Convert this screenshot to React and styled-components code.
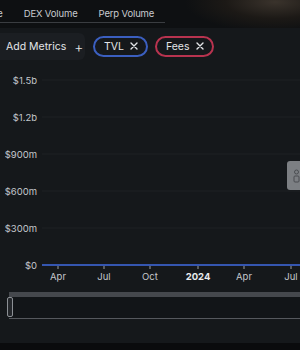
import React from "react"
import styled, { createGlobalStyle } from "styled-components"

const Global = createGlobalStyle`
  html, body {
    margin: 0;
    padding: 0;
    background: #0e1012;
    overflow: hidden;
  }
  * { box-sizing: border-box; }
`

const Page = styled.div`
  width: 300px;
  height: 350px;
  display: flex;
  flex-direction: column;
  font-family: Inter, "Liberation Sans", sans-serif;
  background: #0e1012;
  overflow: hidden;
  position: relative;
`

const TabBar = styled.div`
  height: 28px;
  flex-shrink: 0;
  background: radial-gradient(ellipse 90px 30px at 275px 2px, #3a332c 0%, #1c1916 55%, rgba(14,16,18,0) 100%), #0e1012;
`

const Tabs = styled.div`
  display: flex;
  gap: 21px;
  height: 23px;
  width: 165px;
  align-items: center;
  border-bottom: 1px solid #3a3d41;
  padding-top: 4px;
`

const Tab = styled.div`
  font-size: 9.5px;
  letter-spacing: -0.15px;
  color: #c8cbd0;
  white-space: nowrap;
  margin-left: ${p => p.$offset || 0}px;
`

const Panel = styled.div`
  flex: 1;
  background: #15181b;
  display: flex;
  flex-direction: column;
  position: relative;
`

const Toolbar = styled.div`
  display: flex;
  align-items: center;
  height: 41px;
  padding-bottom: 5px;
`

const AddButton = styled.div`
  display: flex;
  align-items: center;
  gap: 8px;
  height: 27px;
  width: 85px;
  padding-left: 6px;
  background: #1b1e22;
  border-radius: 0 6px 6px 0;
  color: #e3e5e8;
  font-size: 10.5px;
  white-space: nowrap;
  margin-right: 8px;
`

const Plus = styled.span`
  font-size: 14px;
  font-weight: 300;
  color: #e3e5e8;
`

const Pill = styled.div`
  display: flex;
  align-items: center;
  gap: 6px;
  height: 21px;
  padding: 0 8px 0 9px;
  border: 2px solid ${p => p.$color};
  border-radius: 11px;
  color: #e3e5e8;
  font-size: 10.5px;
  margin-right: 7px;
`

const Chart = styled.svg`
  display: block;
  flex-shrink: 0;
`

const AxisText = styled.text`
  font-family: Inter, "Liberation Sans", sans-serif;
  font-size: 9.5px;
  fill: ${p => (p.$bold ? "#e8eaed" : "#c4c7cc")};
  font-weight: ${p => (p.$bold ? 700 : 400)};
`

const Slider = styled.div`
  margin-left: 9px;
  margin-top: 7px;
  height: 27px;
  border-top: 5px solid #45484d;
  border-bottom: 1px solid #55585d;
  background: #121518;
  position: relative;
`

const Handle = styled.div`
  position: absolute;
  left: -2px;
  top: 0px;
  width: 6px;
  height: 20px;
  border: 1px solid #8c9095;
  border-radius: 2px;
  background: #24272b;
`

const BottomStrip = styled.div`
  margin-top: auto;
  height: 7px;
  background: #0a0b0d;
`

const SideTool = styled.div`
  position: absolute;
  right: -6px;
  top: 133px;
  width: 19px;
  height: 29px;
  border-radius: 3px;
  background: #7c7f83;
  display: flex;
  align-items: center;
  justify-content: center;
`

const yTicks = [
  ["$1.5b", 80],
  ["$1.2b", 117],
  ["$900m", 154],
  ["$600m", 191],
  ["$300m", 228],
  ["$0", 265],
]

const xTicks = [
  ["Apr", 58],
  ["Jul", 104],
  ["Oct", 150],
  ["2024", 198, true],
  ["Apr", 244],
  ["Jul", 291],
]

// chart svg starts at page y = 69
const top = 69

function Close() {
  return (
    <svg width="8" height="8" viewBox="0 0 8 8">
      <path d="M1 1L7 7M7 1L1 7" stroke="#e3e5e8" strokeWidth="1.4" strokeLinecap="round" />
    </svg>
  )
}

export default function App() {
  return (
    <Page>
      <Global />
      <TabBar>
        <Tabs>
          <Tab $offset={-35}>Revenue</Tab>
          <Tab>DEX Volume</Tab>
          <Tab>Perp Volume</Tab>
        </Tabs>
      </TabBar>
      <Panel>
        <Toolbar>
          <AddButton>
            Add Metrics <Plus>+</Plus>
          </AddButton>
          <Pill $color="#3b5fc0">
            TVL <Close />
          </Pill>
          <Pill $color="#b8334f">
            Fees <Close />
          </Pill>
        </Toolbar>
        <Chart width="300" height="216" viewBox={`0 ${top} 300 216`}>
          {yTicks.map(([label, y]) => (
            <g key={label}>
              {label !== "$0" && (
                <line x1="42" x2="300" y1={y} y2={y} stroke="#1e2125" strokeWidth="1" />
              )}
              <AxisText x="37" y={y + 3.5} textAnchor="end">
                {label}
              </AxisText>
            </g>
          ))}
          <line x1="42" x2="300" y1="265" y2="265" stroke="#3556b0" strokeWidth="2" />
          {xTicks.map(([label, x, bold], i) => (
            <g key={i}>
              <line x1={x} x2={x} y1="266" y2="269" stroke="#9a9da2" strokeWidth="1" />
              <AxisText x={x} y="280" textAnchor="middle" $bold={bold}>
                {label}
              </AxisText>
            </g>
          ))}
        </Chart>
        <Slider>
          <Handle />
        </Slider>
        <BottomStrip />
        <SideTool>
          <svg width="9" height="18" viewBox="0 0 9 18">
            <circle cx="4.5" cy="5" r="2" fill="none" stroke="#4a4d51" strokeWidth="1" />
            <rect x="2" y="9" width="5" height="6" rx="1" fill="none" stroke="#4a4d51" strokeWidth="1" />
          </svg>
        </SideTool>
      </Panel>
    </Page>
  )
}
